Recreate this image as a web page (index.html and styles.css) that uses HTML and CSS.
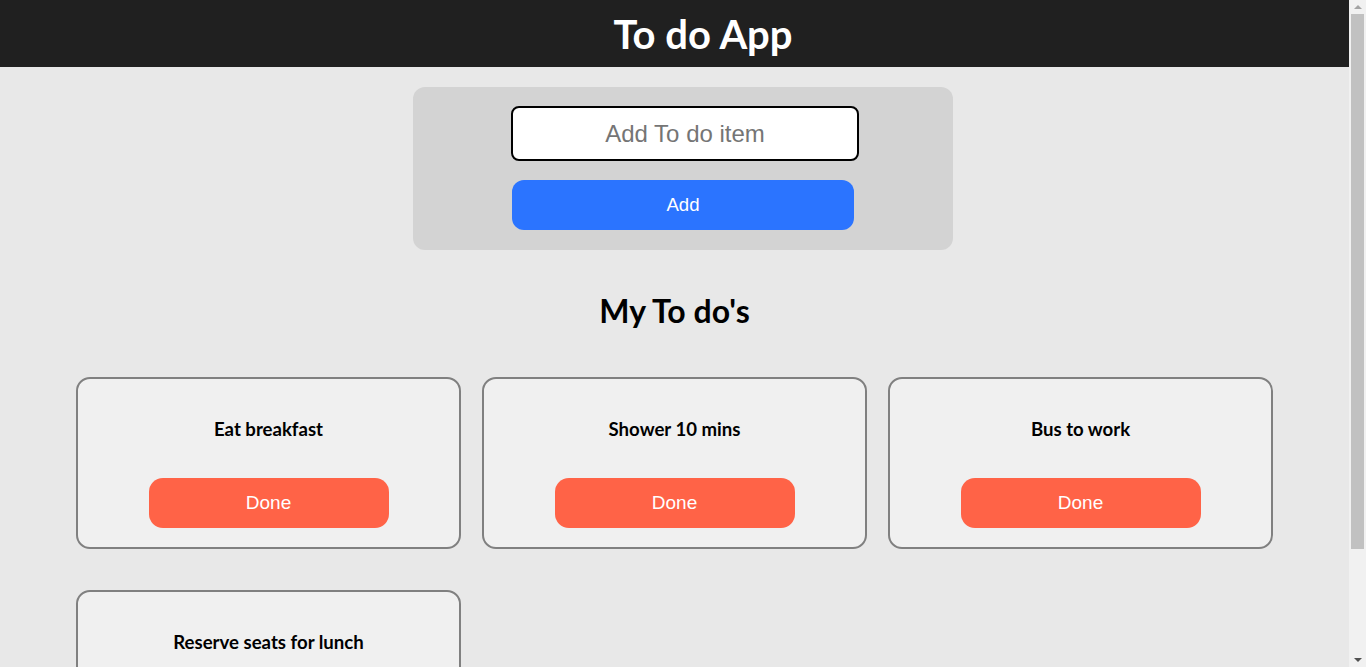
FILE: index.html
```html
<!DOCTYPE html>
<html lang="en">
<head>
<meta charset="utf-8">
<title>To do App</title>
<link rel="stylesheet" href="styles.css">
</head>
<body>
<div class="page">
  <header class="app-header">
    <h1 class="app-title">To do App</h1>
  </header>
  <main class="main">
    <section class="add-panel">
      <input class="add-input" type="text" placeholder="Add To do item">
      <button class="add-btn" type="button">Add</button>
    </section>
    <h2 class="list-title">My To do's</h2>
    <section class="cards">
      <div class="card"><p class="card-text">Eat breakfast</p><button class="done-btn" type="button">Done</button></div>
      <div class="card"><p class="card-text">Shower 10 mins</p><button class="done-btn" type="button">Done</button></div>
      <div class="card"><p class="card-text">Bus to work</p><button class="done-btn" type="button">Done</button></div>
      <div class="card"><p class="card-text">Reserve seats for lunch</p><button class="done-btn" type="button">Done</button></div>
    </section>
  </main>
</div>
<div class="scrollbar" aria-hidden="true">
  <span class="sb-arrow sb-up"></span>
  <span class="sb-thumb"></span>
  <span class="sb-rest"></span>
  <span class="sb-arrow sb-down"></span>
</div>
</body>
</html>
```
FILE: styles.css
```css
* { box-sizing: border-box; }
html, body { margin: 0; padding: 0; }
body {
  background: #e8e8e8;
  font-family: Lato, "Liberation Sans", sans-serif;
  color: #000;
}
.page { width: 1349px; }
.app-header {
  background: #202020;
  height: 67px;
  display: flex;
  align-items: center;
  justify-content: center;
  padding-left: 57px;
}
.app-title {
  margin: 0;
  color: #fff;
  font-family: Lato, sans-serif;
  font-weight: 700;
  font-size: 40px;
  line-height: 48px;
}
.main {
  display: flex;
  flex-direction: column;
  align-items: center;
  padding-bottom: 27px;
}
.add-panel {
  width: 540px;
  margin: 20px 0 0 17px;
  background: #d3d3d3;
  border-radius: 12px;
  padding: 19px 0 20px 98px;
  display: flex;
  flex-direction: column;
  align-items: flex-start;
}
.add-input {
  width: 348px;
  height: 55px;
  border: 2px solid #000;
  border-radius: 8px;
  background: #fff;
  font-family: "Liberation Sans", Arial, sans-serif;
  font-size: 24px;
  text-align: center;
  outline: none;
  padding: 0 8px;
}
.add-input::placeholder { color: #757575; }
.add-btn {
  width: 342px;
  height: 50px;
  margin: 19px 0 0 1px;
  border: none;
  border-radius: 12px;
  background: #2b74ff;
  color: #fff;
  font-family: "Liberation Sans", Arial, sans-serif;
  font-size: 18.6px;
}
.list-title {
  margin: 42px 0 47px;
  font-family: Lato, sans-serif;
  font-weight: 700;
  font-size: 32px;
  line-height: 38px;
}
.cards {
  width: 1197px;
  display: grid;
  grid-template-columns: repeat(3, 1fr);
  column-gap: 21px;
  row-gap: 41px;
}
.card {
  height: 172px;
  border: 2px solid #808080;
  border-radius: 14px;
  background: #f0f0f0;
  padding: 20px 0 19px;
  display: flex;
  flex-direction: column;
  align-items: center;
}
.card-text {
  margin: 18px 0 0;
  font-weight: 700;
  font-size: 18.6px;
  line-height: 24px;
}
.done-btn {
  margin-top: 37px;
  width: 240px;
  height: 50px;
  border: none;
  border-radius: 14px;
  background: #ff6347;
  color: #fff;
  font-family: "Liberation Sans", Arial, sans-serif;
  font-size: 19px;
}
.scrollbar {
  position: fixed;
  top: 0;
  right: 0;
  width: 17px;
  height: 100vh;
  background: #f1f1f1;
  display: flex;
  flex-direction: column;
  align-items: center;
  padding: 0 2px;
}
.sb-arrow {
  width: 0;
  height: 0;
  border-left: 4px solid transparent;
  border-right: 4px solid transparent;
  flex: none;
}
.sb-up {
  margin: 5px 0 5px;
  border-bottom: 4px solid #a3a3a3;
}
.sb-thumb {
  width: 13px;
  height: 535px;
  background: #c1c1c1;
  flex: none;
}
.sb-rest { flex: 1; }
.sb-down {
  margin: 0 0 5px;
  border-top: 4px solid #505050;
}
```
